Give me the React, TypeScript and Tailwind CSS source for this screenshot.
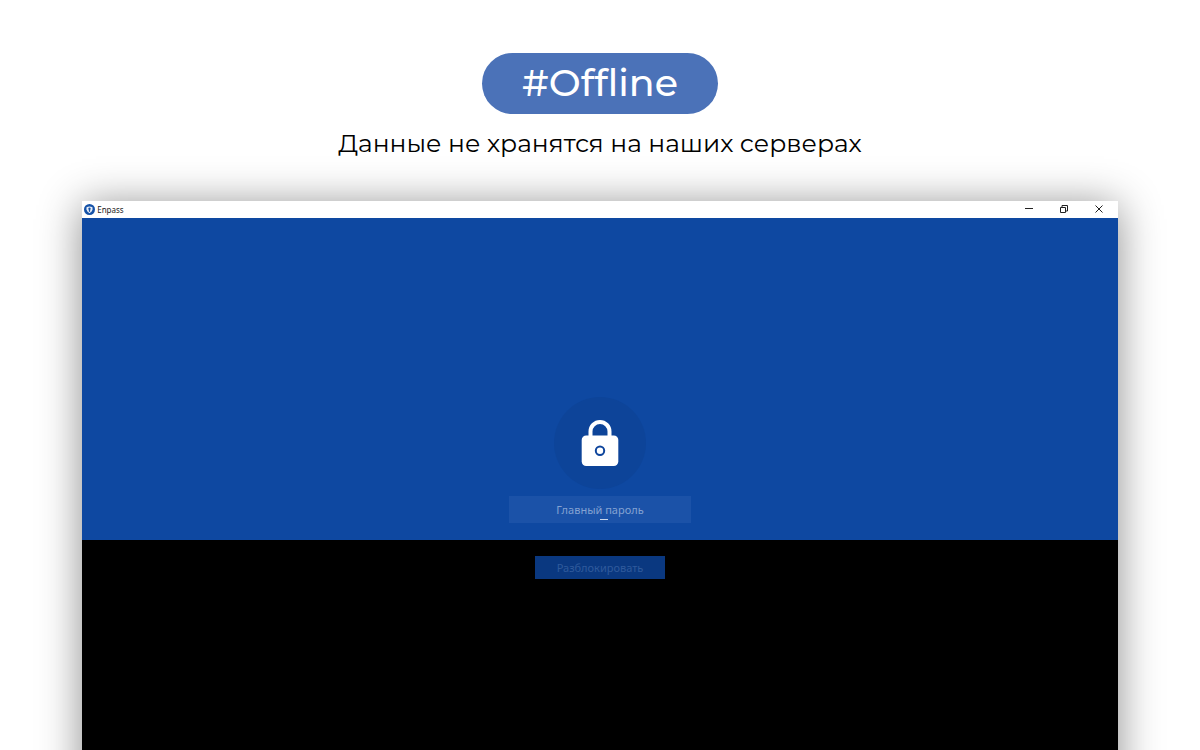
import React from 'react';

const AppLogo: React.FC = () => (
  <svg viewBox="0 0 22 22" className="h-[11px] w-[11px]" aria-hidden="true">
    <circle cx="11" cy="11" r="11" fill="#1552a8" />
    <path d="M5 6.5 Q11 3.5 17 6.5 V11 Q16.5 15 11 18.5 Q5.5 15 5 11 Z" fill="#e8eef7" />
    <path d="M11 7 a2.5 2.5 0 0 1 1.3 4.6 V15 L11 16 L9.7 15 V11.6 A2.5 2.5 0 0 1 11 7" fill="#1552a8" />
  </svg>
);

const LockIcon: React.FC = () => (
  <svg viewBox="0 0 38 46" className="h-[46px] w-[38px]" aria-hidden="true">
    <path d="M9.5 18 V11.5 a9.5 9.5 0 0 1 19 0 V18" fill="none" stroke="#fff" strokeWidth="4" />
    <rect x="0.7" y="15.5" width="36.6" height="30.5" rx="4.5" fill="#fff" />
    <circle cx="19" cy="30.7" r="4.2" fill="none" stroke="#0e459c" strokeWidth="2" />
  </svg>
);

const TitleBar: React.FC = () => (
  <header className="flex h-[17px] shrink-0 items-center bg-white pl-0.5">
    <AppLogo />
    <span className="ml-0.5 font-['Noto_Sans',sans-serif] text-[8px] leading-none text-[#222]">Enpass</span>
    <div className="ml-auto flex pr-3.5 pb-px text-[#222]">
      <button type="button" aria-label="Свернуть" className="mr-[25px]">
        <svg viewBox="0 0 10 10" className="h-2.5 w-2.5" fill="none" stroke="currentColor">
          <path d="M1 4.5 H9" />
        </svg>
      </button>
      <button type="button" aria-label="Восстановить" className="mr-[25px]">
        <svg viewBox="0 0 10 10" className="h-2.5 w-2.5" fill="none" stroke="currentColor">
          <path d="M1.5 3.5 H6.5 V8.5 H1.5 Z M3 3 V1.5 H8.5 V7 H7" />
        </svg>
      </button>
      <button type="button" aria-label="Закрыть">
        <svg viewBox="0 0 10 10" className="h-2.5 w-2.5" fill="none" stroke="currentColor">
          <path d="M1.5 1.5 L8.5 8.5 M8.5 1.5 L1.5 8.5" />
        </svg>
      </button>
    </div>
  </header>
);

const UnlockForm: React.FC = () => (
  <form className="flex flex-1 flex-col items-center bg-black" onSubmit={(e) => e.preventDefault()}>
    <div className="flex h-[322px] w-full flex-col items-center justify-end bg-[#0e48a1] pb-[17px]">
      <div className="flex h-[92px] w-[92px] items-center justify-center rounded-full bg-[#0d4499]">
        <LockIcon />
      </div>
      <div className="relative mt-[7px]">
        <input
          type="password"
          aria-label="Главный пароль"
          placeholder="Главный пароль"
          className="block h-[27px] w-[182px] bg-[#1b52a8] text-center font-['Noto_Sans',sans-serif] text-[11px] text-white outline-none placeholder:text-[#84a2d2]"
        />
        <span className="absolute bottom-[3px] left-1/2 h-px w-2 bg-[#c9d7ed]" />
      </div>
    </div>
    <button
      type="submit"
      className="mt-4 h-[23px] w-[130px] bg-[#0a3880] pt-0.5 font-['Noto_Sans',sans-serif] text-[11px] text-[#2f5a9c]"
    >
      Разблокировать
    </button>
  </form>
);

const App: React.FC = () => {
  return (
    <main className="flex h-screen flex-col items-center overflow-hidden bg-white font-['Montserrat','Inter',sans-serif]">
      <h1 className="mt-[53px] flex h-[61px] w-[236px] shrink-0 items-center justify-center rounded-full bg-[#4b72b8] pb-0.5 text-[38px] font-medium text-white">
        #Offline
      </h1>
      <p className="mt-[11px] shrink-0 text-[25px] leading-9 text-black">Данные не хранятся на наших серверах</p>
      {/* the window runs past the bottom edge so its shadow doesn't fade out there */}
      <section className="-mb-16 mt-10 flex w-[86.3%] flex-1 flex-col shadow-[0_4px_40px_rgba(0,0,0,0.45)]">
        <TitleBar />
        <UnlockForm />
      </section>
    </main>
  );
};

export default App;
